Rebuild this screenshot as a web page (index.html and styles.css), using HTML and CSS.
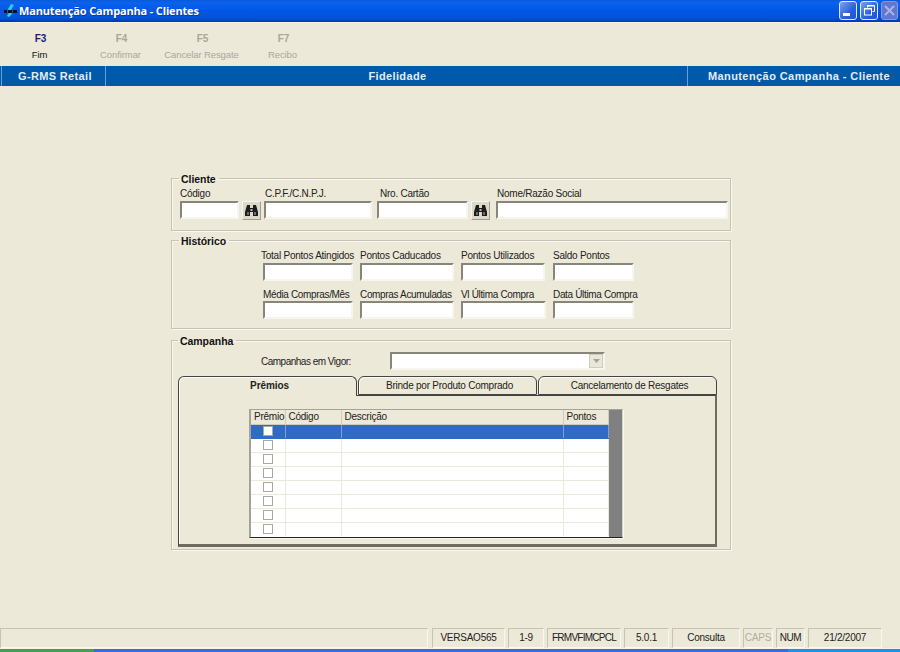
FILE: index.html
```html
<!DOCTYPE html>
<html lang="pt">
<head>
<meta charset="utf-8">
<title>Manutenção Campanha - Clientes</title>
<link rel="stylesheet" href="styles.css">
</head>
<body>
<div class="window">
  <header class="titlebar">
    <svg class="app-icon" width="13" height="13" viewBox="0 0 13 13"><path d="M7 0 L10 1 L7 6 L8 10 L5 13 L3 12 L5 8 L4 5 Z" fill="#2ad0e0"/><rect x="0" y="6" width="3" height="3" fill="#111"/><rect x="4" y="6" width="4" height="3" fill="#111"/><rect x="9" y="6" width="4" height="3" fill="#111"/></svg>
    <span class="title-text">Manutenção Campanha - Clientes</span>
    <div class="win-buttons">
      <div class="win-btn"><svg width="18" height="19" viewBox="0 0 18 19"><rect x="4" y="12" width="7" height="3" fill="#fff"/></svg></div>
      <div class="win-btn"><svg width="18" height="19" viewBox="0 0 18 19"><path d="M7.5 6.5 V4.5 H14.5 V10.5 H12.5" fill="none" stroke="#fff"/><path d="M7 5 H15" stroke="#fff"/><rect x="4.500" y="7.500" width="7" height="6.500" fill="none" stroke="#fff"/><path d="M4 8 H12" stroke="#fff"/></svg></div>
      <div class="win-btn win-btn-off"><svg width="17" height="19" viewBox="0 0 17 19"><path d="M4 5 L13 14 M13 5 L4 14" stroke="#a8b4e4" stroke-width="2"/></svg></div>
    </div>
  </header>

  <nav class="toolbar">
    <div class="tool tool-on"><b>F3</b><span>Fim</span></div>
    <div class="tool"><b>F4</b><span>Confirmar</span></div>
    <div class="tool"><b>F5</b><span>Cancelar Resgate</span></div>
    <div class="tool"><b>F7</b><span>Recibo</span></div>
  </nav>

  <div class="bluebar">
    <div class="bb-cell bb-left">G-RMS Retail</div>
    <div class="bb-cell bb-mid">Fidelidade</div>
    <div class="bb-cell bb-right">Manutenção Campanha - Cliente</div>
  </div>

  <main class="main">
    <fieldset class="group group-cliente">
      <legend>Cliente</legend>
      <div class="cliente-row">
        <div class="field w59"><label>Código</label><div class="input"></div></div>
        <button class="find" type="button"><svg width="15" height="13" viewBox="0 0 15 13"><use href="#bino"/></svg></button>
        <div class="field w108"><label class="lab1">C.P.F./C.N.P.J.</label><div class="input"></div></div>
        <div class="field w91 gap5"><label class="lab3">Nro. Cartão</label><div class="input"></div></div>
        <button class="find" type="button"><svg width="15" height="13" viewBox="0 0 15 13"><use href="#bino"/></svg></button>
        <div class="field w232 gap6"><label class="lab1">Nome/Razão Social</label><div class="input"></div></div>
      </div>
    </fieldset>

    <fieldset class="group group-hist">
      <legend>Histórico</legend>
      <div class="hist-grid">
        <div class="field"><label class="out">Total Pontos Atingidos</label><div class="input"></div></div>
        <div class="field"><label>Pontos Caducados</label><div class="input"></div></div>
        <div class="field"><label>Pontos Utilizados</label><div class="input"></div></div>
        <div class="field"><label>Saldo Pontos</label><div class="input"></div></div>
        <div class="field"><label>Média Compras/Mês</label><div class="input"></div></div>
        <div class="field"><label>Compras Acumuladas</label><div class="input"></div></div>
        <div class="field"><label>Vl Última Compra</label><div class="input"></div></div>
        <div class="field"><label>Data Última Compra</label><div class="input"></div></div>
      </div>
    </fieldset>

    <fieldset class="group group-camp">
      <legend>Campanha</legend>
      <div class="vigor">
        <span class="vigor-label">Campanhas em Vigor:</span>
        <div class="combo"><div class="combo-btn"><svg width="9" height="6" viewBox="0 0 9 6"><path d="M1 1 H8 L4.500 5 Z" fill="#a5a396"/></svg></div></div>
      </div>
      <div class="tabs">
        <div class="tab tab-active">Prêmios</div>
        <div class="tab">Brinde por Produto Comprado</div>
        <div class="tab">Cancelamento de Resgates</div>
      </div>
      <div class="panel">
        <div class="grid-frame">
          <table class="grid">
            <colgroup><col class="c1"><col class="c2"><col class="c3"><col class="c4"></colgroup>
            <thead><tr><th>Prêmio</th><th>Código</th><th>Descrição</th><th>Pontos</th></tr></thead>
            <tbody>
              <tr class="sel"><td class="chk"><i></i></td><td></td><td></td><td></td></tr>
              <tr><td class="chk"><i></i></td><td></td><td></td><td></td></tr>
              <tr><td class="chk"><i></i></td><td></td><td></td><td></td></tr>
              <tr><td class="chk"><i></i></td><td></td><td></td><td></td></tr>
              <tr><td class="chk"><i></i></td><td></td><td></td><td></td></tr>
              <tr><td class="chk"><i></i></td><td></td><td></td><td></td></tr>
              <tr><td class="chk"><i></i></td><td></td><td></td><td></td></tr>
              <tr><td class="chk"><i></i></td><td></td><td></td><td></td></tr>
            </tbody>
          </table>
          <div class="grid-side"></div>
        </div>
      </div>
    </fieldset>
  </main>

  <footer class="status">
    <div class="st st-first"></div>
    <div class="st s73">VERSAO565</div>
    <div class="st s35">1-9</div>
    <div class="st s74">FRMVFIMCPCL</div>
    <div class="st s44">5.0.1</div>
    <div class="st s68">Consulta</div>
    <div class="st s30 st-off">CAPS</div>
    <div class="st s29">NUM</div>
    <div class="st s74b">21/2/2007</div>
  </footer>
  <div class="taskbar"><div class="start"></div><div class="task-mid"></div><div class="tray"></div></div>
</div>
<svg class="defs" width="0" height="0"><defs><g id="bino"><path d="M3 1 H6 V4 H9 V1 H12 L14 8 V12 H9 V8 H6 V12 H1 V8 Z" fill="#1c1c1c"/><rect x="6.500" y="5" width="2" height="2" fill="#bcbab0"/><rect x="3" y="8" width="2" height="3" fill="#6e6e68"/><rect x="10" y="8" width="2" height="3" fill="#6e6e68"/></g></defs></svg>
</body>
</html>
```
FILE: styles.css
```css
* { box-sizing: border-box; }
html, body { margin: 0; padding: 0; }
body {
  width: 900px;
  height: 652px;
  overflow: hidden;
  background: #ece9d8;
  font-family: "Liberation Sans", Arial, sans-serif;
  font-size: 10px;
  letter-spacing: -0.24px;
  color: #222;
}
.window { width: 900px; height: 652px; display: flex; flex-direction: column; }
.defs { position: absolute; }

.titlebar {
  height: 23px;
  flex: none;
  display: flex;
  align-items: center;
  padding-left: 4px;
  background: linear-gradient(#0a5ad8 0, #0a62ee 3px, #0256e6 11px, #0252dc 18px, #0038b0 22px, #f4f2e8 22px);
}
.app-icon { margin-right: 2px; margin-top: -2px; }
.title-text {
  color: #fff;
  font-family: "Open Sans", "Liberation Sans", sans-serif;
  font-weight: 700;
  font-size: 11px;
  letter-spacing: -0.16px;
  text-shadow: 1px 1px 0 #0f3a9a;
  margin-top: -2px;
}
.win-buttons { margin-left: auto; display: flex; gap: 3px; padding-right: 2px; margin-top: -2px; }
.win-btn {
  width: 18px;
  height: 19px;
  border: 1px solid #dfe8ff;
  border-radius: 3px;
  background: linear-gradient(135deg, #7da2f0, #2a5fe0 60%, #2450d0);
  display: flex;
  overflow: hidden;
}
.win-btn svg { flex: none; margin: -1px; }
.win-btn-off {
  width: 17px;
  border-color: #8298e0;
  background: #6278d0;
}

.toolbar { height: 43px; flex: none; display: flex; }
.tool {
  width: 81px;
  display: flex;
  flex-direction: column;
  align-items: center;
  color: #a9a79a;
  padding-top: 10px;
  white-space: nowrap;
}
.tool b { font-size: 10px; line-height: 12px; letter-spacing: 0; }
.tool span { font-size: 9.5px; line-height: 12px; margin: 4px 2px 0 0; letter-spacing: -0.1px; }
.tool-on b { color: #1c1c78; }
.tool-on span { color: #111; }

.bluebar {
  height: 20px;
  flex: none;
  display: flex;
  background: #0059a9;
  color: #e4ecf4;
  font-weight: bold;
  font-size: 11px;
  letter-spacing: 0.35px;
  line-height: 20px;
}
.bb-cell { white-space: nowrap; }
.bb-left {
  width: 105px;
  margin-left: 1px;
  padding-left: 16px;
  border-left: 1px solid #6f9fd0;
  border-right: 1px solid #6f9fd0;
}
.bb-mid { width: 581px; padding-left: 2px; text-align: center; }
.bb-right {
  flex: 1;
  border-left: 1px solid #6f9fd0;
  text-align: right;
  padding-right: 10px;
  letter-spacing: 0.42px;
}

.main {
  flex: 1;
  padding: 86px 0 0 171px;
}
.group {
  width: 560px;
  margin: 0;
  padding: 0;
  border: 1px solid #c6c3b1;
  box-shadow: 1px 1px 0 #f8f7f1, inset 1px 1px 0 #f8f7f1;
  min-width: 0;
}
.group legend {
  position: relative;
  top: 1px;
  font-weight: bold;
  font-size: 10.5px;
  line-height: 12px;
  letter-spacing: -0.05px;
  color: #111;
  padding: 0 3px 0 2px;
  margin-left: 7px;
}
.group-cliente { padding: 3px 2px 11px 8px; }
.group-cliente legend { margin-left: -1px; }
.group-hist { margin-top: 3px; padding: 3px 0 9px 0; }
.group-camp { margin-top: 5px; padding: 6px 0 2px 6px; }
.group-camp legend { margin-left: 0; }

label { display: block; height: 14px; line-height: 14px; white-space: nowrap; }
.lab1 { margin-left: 1px; }
.lab3 { margin-left: 3px; }
.cliente-row { display: flex; align-items: flex-end; }
.w59 { width: 59px; }
.w108 { width: 108px; margin-left: 3px; }
.w91 { width: 91px; }
.w232 { width: 232px; }
.gap5 { margin-left: 5px; }
.gap6 { margin-left: 6px; }
.input {
  height: 18px;
  background: #fff;
  border-style: solid;
  border-width: 2px;
  border-color: #88867a #f6f5ee #f6f5ee #88867a;
}
.find {
  width: 19px;
  height: 19px;
  margin: 0 0 -1px 3px;
  padding: 0;
  background: #dcd9c8;
  border: 1px solid;
  border-color: #f6f5ee #a09e90 #a09e90 #f6f5ee;
  display: flex;
  align-items: center;
  justify-content: center;
}

.hist-grid {
  display: grid;
  grid-template-columns: 90px 94px 85px 81px;
  column-gap: 7px;
  row-gap: 8px;
  margin-left: 91px;
}
.hist-grid .field:nth-child(3) .input { width: 84px; }
.out { margin-left: -2px; }
.hist-grid .field:nth-child(n+5) label { height: 12px; line-height: 12px; letter-spacing: -0.34px; }

.vigor { display: flex; align-items: center; padding-left: 83px; height: 18px; }
.vigor-label { width: 129px; letter-spacing: -0.5px; }
.combo {
  width: 215px;
  height: 18px;
  background: #fff;
  border-style: solid;
  border-width: 2px;
  border-color: #88867a #f6f5ee #f6f5ee #88867a;
  display: flex;
  justify-content: flex-end;
}
.combo-btn {
  width: 14px;
  background: #e9e7da;
  border: 1px solid #cfccbb;
  display: flex;
  align-items: center;
  justify-content: center;
}

.tabs { display: flex; width: 539px; margin-top: 6px; gap: 1px; height: 19px; }
.tab {
  flex: 1;
  border: 1px solid #444;
  border-radius: 6px 6px 0 0;
  box-shadow: inset 1px 1px 0 #fbfaf5;
  text-align: center;
  padding-left: 4px;
  line-height: 17px;
  color: #222;
}
.tab-active {
  flex: none;
  width: 179px;
  height: 20px;
  background: #ece9d8;
  border-bottom: 0;
  font-weight: bold;
  position: relative;
  z-index: 1;
  line-height: 18px;
  letter-spacing: -0.1px;
}
.panel {
  width: 539px;
  height: 152px;
  border: 1px solid #444;
  border-right: 2px solid #6e6c60;
  border-bottom: 3px solid #6e6c60;
  box-shadow: inset 1px 0 0 #fbfaf5;
  padding: 13px 0 0 70px;
}
.grid-frame {
  display: flex;
  align-items: flex-start;
  width: 374px;
  height: 129px;
  border-top: 1px solid #a5a394;
  border-left: 2px solid #a5a394;
  border-bottom: 1px solid #222;
  border-right: 1px solid #d5d2c0;
  box-shadow: 1px 1px 0 #f8f7f1;
  background: #fff;
}
.grid { width: 357px; border-collapse: collapse; table-layout: fixed; flex: none; background: #fff; }
.c1 { width: 34px; }
.c2 { width: 56px; }
.c3 { width: 222px; }
.c4 { width: 45px; }
.grid th {
  height: 14px;
  padding: 0 0 0 3px;
  background: #ece9d8;
  font-weight: normal;
  text-align: left;
  border-right: 1px solid #cfccba;
  border-bottom: 1px solid #cfccba;
  line-height: 12px;
  color: #222;
  white-space: nowrap;
}
.grid td {
  height: 14px;
  padding: 0;
  border-right: 1px solid #ece9d8;
  border-bottom: 1px solid #ece9d8;
  line-height: 0;
}
.grid tbody tr:last-child td { border-bottom: 0; }
.grid .sel td { background: #316ac5; border-bottom-color: #316ac5; border-right-color: #7f9fd8; }
.chk { text-align: center; }
.chk i {
  display: inline-block;
  width: 10px;
  height: 10px;
  background: #fff;
  border: 1px solid #a9a9a2;
}
.grid-side { flex: 1; align-self: stretch; background: #808080; }

.status { height: 20px; flex: none; display: flex; gap: 3px; }
.st {
  height: 20px;
  border: 1px solid;
  border-color: #c6c3b1 #f8f7f1 #f8f7f1 #c6c3b1;
  text-align: center;
  line-height: 18px;
  white-space: nowrap;
  color: #222;
}
.st-first { width: 428px; margin-right: 1px; }
.s73 { width: 73px; }
.s35 { width: 36px; }
.s74 { width: 74px; letter-spacing: -0.75px; }
.s44 { width: 45px; }
.s68 { width: 68px; }
.s30 { width: 30px; }
.s29 { width: 29px; letter-spacing: -0.5px; }
.s74b { width: 74px; }
.st-off { color: #b0aea0; }

.taskbar { height: 4px; flex: none; display: flex; border-top: 1px solid #f4f2e8; }
.start { width: 94px; background: #4b9a52; }
.task-mid { flex: 1; background: #2f6fe0; }
.tray { width: 112px; background: #1a92e6; }
```
